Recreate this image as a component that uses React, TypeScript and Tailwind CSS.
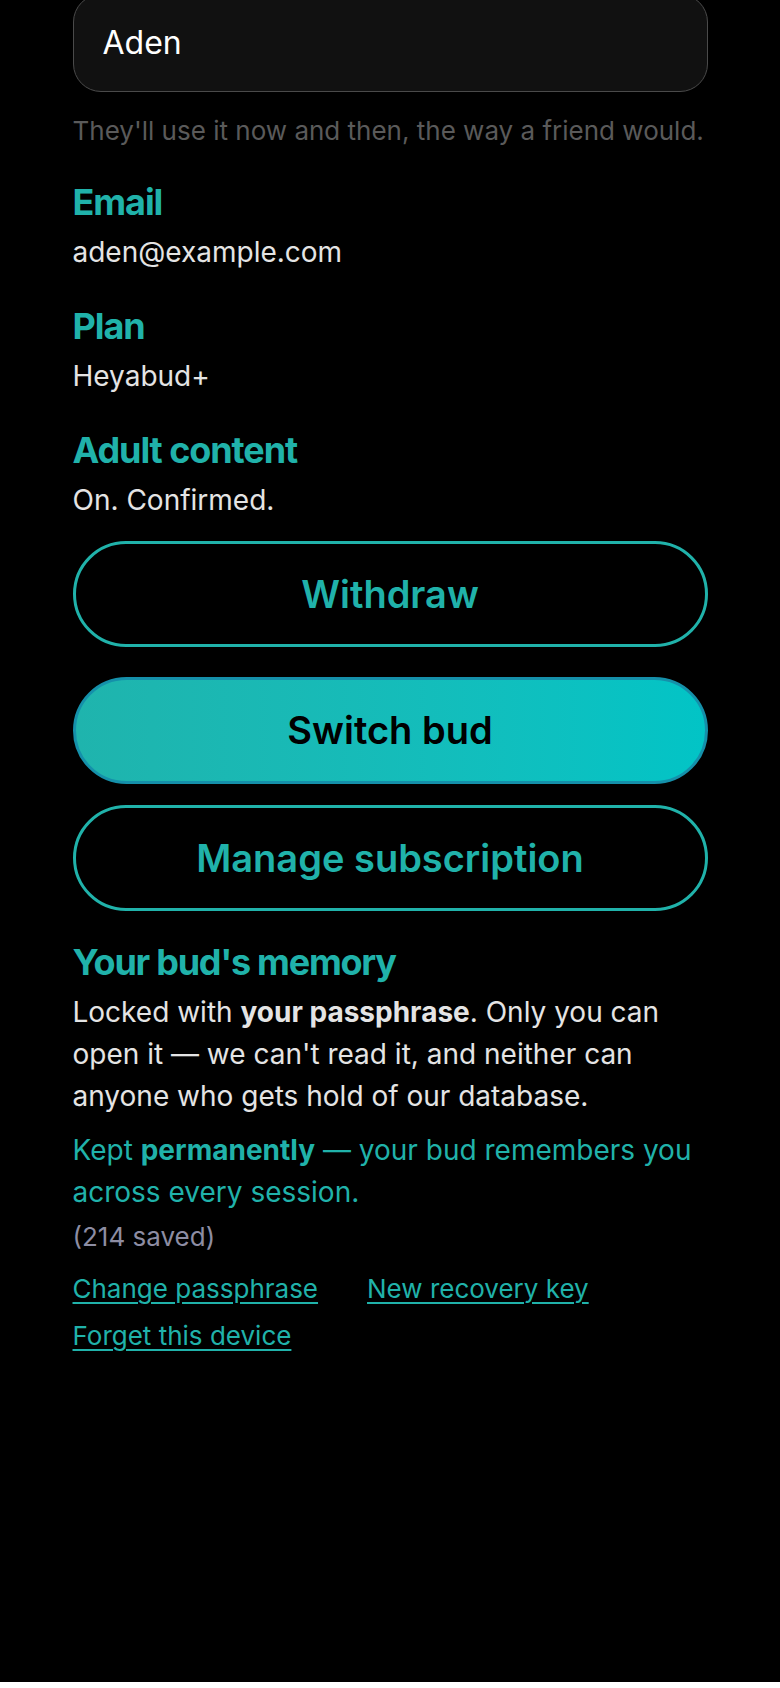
import React from 'react';

const links = ['Change passphrase', 'New recovery key', 'Forget this device'];

function Field({ label, value, first }: { label: string; value: string; first?: boolean }) {
  return (
    <div className={first ? 'mt-[30px]' : 'mt-[32px]'}>
      <h3 className="text-[36px] leading-[44px] font-bold tracking-[-0.03em] text-[#20b2aa]">{label}</h3>
      <p className="mt-[8px] text-[28px] leading-[40px] text-[#e4e4e4]">{value}</p>
    </div>
  );
}

export default function App() {
  return (
    <div className="min-h-screen bg-black" style={{ fontFamily: 'Inter, "Noto Sans", sans-serif' }}>
      <div className="mx-auto w-[635px] pb-[300px]">
        {/* name input, scrolled partly off the top */}
        <div className="-mt-[6px] flex h-[98px] items-center rounded-[28px] border-[1.5px] border-[#4a4a4a] bg-[#111111] px-[29px]">
          <span className="text-[32px] text-white">Aden</span>
        </div>
        <p className="mt-[19px] text-[26px] leading-[39px] text-[#5a5a5a]">
          They'll use it now and then, the way a friend would.
        </p>

        <Field first label="Email" value="aden@example.com" />
        <Field label="Plan" value="Heyabud+" />
        <Field label="Adult content" value="On. Confirmed." />

        <div className="mt-[21px] flex flex-col">
          <button className="h-[106px] rounded-full border-[3px] border-[#20b2aa] text-[38px] font-semibold text-[#20b2aa]">
            Withdraw
          </button>
          <button className="mt-[30px] h-[107px] rounded-full border-[3px] border-[#1590aa] bg-gradient-to-r from-[#1fb4ad] to-[#02c4c6] text-[38px] font-semibold text-black">
            Switch bud
          </button>
          <button className="mt-[21px] h-[106px] rounded-full border-[3px] border-[#20b2aa] text-[38px] font-semibold text-[#20b2aa]">
            Manage subscription
          </button>
        </div>

        <h3 className="mt-[29px] text-[36px] leading-[44px] font-bold tracking-[-0.035em] text-[#20b2aa]">
          Your bud's memory
        </h3>
        <p className="mt-[7px] text-[28px] leading-[42px] text-[#e4e4e4]">
          Locked with <strong className="font-bold">your passphrase</strong>. Only you can open it — we can't read it,
          and neither can anyone who gets hold of our database.
        </p>
        <p className="mt-[12px] text-[28px] leading-[42px] text-[#20b2aa]">
          Kept <strong className="font-bold">permanently</strong> — your bud remembers you across every session.
        </p>
        <p className="mt-[4px] text-[26px] leading-[40px] text-[#8d8da3]">(214 saved)</p>
        <div className="mt-[11px] flex flex-wrap gap-x-[49px] gap-y-[5px]">
          {links.map((l) => (
            <a
              key={l}
              href="#"
              className="text-[26px] leading-[42px] text-[#20b2aa] underline decoration-[2px] underline-offset-[4px]"
            >
              {l}
            </a>
          ))}
        </div>
      </div>
    </div>
  );
}
